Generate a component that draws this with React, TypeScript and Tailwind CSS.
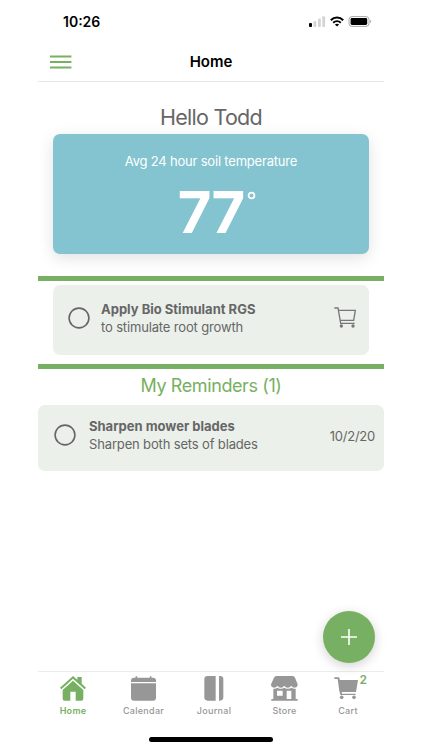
import type { ReactNode } from 'react';

interface TaskRowProps {
  title: string;
  detail: string;
  className: string;
  textClassName: string;
  children: ReactNode;
}

interface TabProps {
  label: string;
  active?: boolean;
  className: string;
  children: ReactNode;
}

function StatusBar() {
  return (
    <div className="flex h-[43px] items-center justify-between pl-[25px] pr-3">
      <span className="text-[14px] leading-none font-semibold text-black">10:26</span>
      <div className="flex items-center gap-1">
        <svg width="17" height="11" viewBox="0 0 17 11">
          <rect x="0" y="7" width="3" height="4" rx="1" fill="#000" />
          <rect x="4.5" y="5" width="2.8" height="6" rx="1" fill="#d4d4d4" />
          <rect x="9" y="2.6" width="2.8" height="8.4" rx="1" fill="#d4d4d4" />
          <rect x="13.3" y="0.2" width="2.8" height="10.8" rx="1" fill="#d4d4d4" />
        </svg>
        <svg width="14" height="11" viewBox="0 0 14 11" fill="none" stroke="#000" strokeWidth="2">
          <path d="M.8 4.2C4.3.6 9.7.6 13.2 4.2" />
          <path d="M3.2 6.8c2.2-2.1 5.4-2.1 7.6 0" />
          <path d="M7 10.6 4.9 8.5c1.2-1 3-1 4.2 0z" fill="#000" stroke="none" />
        </svg>
        <svg width="24" height="11" viewBox="0 0 24 11">
          <rect x="1" y="0.6" width="20" height="9.8" rx="3" fill="none" stroke="#a8a8a8" strokeWidth="1" />
          <rect x="2.6" y="2.1" width="16.6" height="6.8" rx="1.4" fill="#000" />
          <path d="M22.2 3.8c1.4.5 1.4 2.9 0 3.4z" fill="#a8a8a8" />
        </svg>
      </div>
    </div>
  );
}

function Header() {
  return (
    <header className="grid h-[39px] grid-cols-3 items-center border-b border-[#e6e6e6] px-3">
      <svg width="22" height="14" viewBox="0 0 22 14" stroke="#77b062" strokeWidth="1.8">
        <path d="M0 1.5h21.4M0 7h21.4M0 12.5h21.4" />
      </svg>
      <h1 className="pb-0.5 text-center text-[15px] leading-none font-semibold text-black">Home</h1>
    </header>
  );
}

function TaskRow({ title, detail, className, textClassName, children }: TaskRowProps) {
  return (
    <div className={`flex items-center rounded-[7px] bg-[#ebf0eb] ${className}`}>
      <svg className="shrink-0" width="22" height="22" viewBox="0 0 22 22" fill="none" stroke="#666" strokeWidth="1.6">
        <circle cx="11" cy="11" r="9.9" />
      </svg>
      <div className={`flex-1 text-[13px] leading-[18px] text-[#666] ${textClassName}`}>
        <p className="font-bold">{title}</p>
        <p className="tracking-[-0.15px]">{detail}</p>
      </div>
      {children}
    </div>
  );
}

function Tab({ label, active, className, children }: TabProps) {
  return (
    <div className={`flex flex-col items-center pt-1 ${active ? 'text-[#77b062]' : 'text-[#979797]'} ${className}`}>
      <div className="h-[25px]">{children}</div>
      <span className={`mt-1 text-[9px] leading-[12px] tracking-[0.28px] ${active ? 'font-semibold' : 'font-medium'}`}>{label}</span>
    </div>
  );
}

function TabBar() {
  return (
    <nav className="flex h-[66px] border-t border-[#ececec]">
      <Tab label="Home" active className="w-[70px]">
        <svg width="26" height="25" viewBox="0 0 78 75" fill="currentColor">
          <path d="M39 0 52 11V3h13v20l13 12-4 5-35-32L4 40l-4-5z" />
          <path d="M39 14 70 42v26q0 6-6 6H47V47H31v27H14q-6 0-6-6V42z" />
        </svg>
      </Tab>
      <Tab label="Calendar" className="w-[71px]">
        <svg width="25" height="25" viewBox="0 0 75 75" fill="currentColor">
          <path d="M9 5h4q0-5 3-5t3 5h37q0-5 3-5t3 5h4q9 0 9 9v4H0v-4q0-9 9-9z" />
          <path d="M0 22h75v43q0 9-9 9H9q-9 0-9-9z" />
        </svg>
      </Tab>
      <Tab label="Journal" className="w-[70px]">
        <svg width="20" height="25" viewBox="0 0 60 75" fill="currentColor">
          <path d="M11 0h24v74H11Q1 74 1 64V10Q1 0 11 0zM45 0h3q10 0 10 10v54q0 10-10 10h-3z" />
        </svg>
      </Tab>
      <Tab label="Store" className="w-[71px]">
        <svg width="27" height="25" viewBox="0 0 81 75" fill="currentColor">
          <path d="M16 0h49q5 0 7 5l8 20q0 10-9 10-7 0-10-6-4 6-11 6-6 0-10-6-4 6-10 6-7 0-11-6-3 6-10 6-9 0-9-10L9 5q2-5 7-5z" />
          <path fillRule="evenodd" d="M7 38q8 1 12-3 5 4 11 3 6 0 10-3 5 4 11 3 6 0 11-3 4 4 12 3v31h6v5H1v-5h6zM18 44v15h17V44zM47 44v25h14V44z" />
        </svg>
      </Tab>
      <Tab label="Cart" className="relative w-[56px]">
        <svg className="-ml-1" width="24" height="25" viewBox="0 0 72 75" fill="currentColor">
          <path d="M1 4h14l3 8h54l-6 36H23l1 5h41v4H19l-3-12L11 9H1z" />
          <circle cx="23" cy="64" r="5.5" />
          <circle cx="60" cy="64" r="5.5" />
        </svg>
        <span className="absolute top-0 right-[9px] text-[12px] leading-[15px] font-semibold text-[#77b062]">2</span>
      </Tab>
    </nav>
  );
}

export default function App() {
  return (
    <div className="h-[750px] w-full overflow-hidden bg-white font-['Inter',sans-serif]">
      <div className="relative mx-auto flex h-full w-[346px] flex-col">
        <StatusBar />
        <Header />
        <main className="flex-1">
          <h2 className="pt-[20px] pb-[2px] text-center text-[21.5px] leading-[30px] tracking-[-0.75px] text-[#666]">Hello Todd</h2>
          <section className="mx-[15px] h-[120px] rounded-[7px] bg-[#83c4d0] text-center text-white shadow-[0_4px_16px_rgba(0,0,0,0.12)]">
            <p className="pt-[18px] text-[13px] leading-[18px] tracking-[-0.2px]">Avg 24 hour soil temperature</p>
            <div className="mt-[13px] flex items-start justify-center">
              <span className="pl-3 text-[58px] leading-[58px] font-bold tracking-[-1px]">77</span>
              <svg className="mt-[8px] ml-[3px]" width="9" height="9" viewBox="0 0 9 9" fill="none" stroke="#fff" strokeWidth="1.8">
                <circle cx="4.5" cy="4.5" r="2.9" />
              </svg>
            </div>
          </section>
          <div className="mt-[22px] h-[5px] bg-[#77b062]" />
          <TaskRow
            title="Apply Bio Stimulant RGS"
            detail="to stimulate root growth"
            className="mx-[15px] mt-1 h-[70px] pr-3 pb-[5px] pl-[15px]"
            textClassName="ml-[11px]"
          >
            <svg width="23" height="21" viewBox="0 0 69 63" fill="none" stroke="#777" strokeWidth="4">
              <path d="M1 3h11l8 46h42M14 10h50l-5 30H19" />
              <circle cx="22" cy="57" r="5" fill="#777" stroke="none" />
              <circle cx="57" cy="57" r="5" fill="#777" stroke="none" />
            </svg>
          </TaskRow>
          <div className="mt-[9px] h-[5px] bg-[#77b062]" />
          <h3 className="pt-[5px] pb-px text-center text-[18px] leading-[24px] tracking-[-0.4px] text-[#77b062]">My Reminders (1)</h3>
          <TaskRow
            title="Sharpen mower blades"
            detail="Sharpen both sets of blades"
            className="mt-[6px] h-[66px] pr-[9px] pb-[6px] pl-[16px]"
            textClassName="ml-[13px]"
          >
            <span className="mt-1 text-[13px] tracking-[-0.25px] text-[#666]">10/2/20</span>
          </TaskRow>
        </main>
        <TabBar />
        <div className="h-[13px]">
          <div className="mx-auto h-[5px] w-[124px] rounded-full bg-black" />
        </div>
        <button className="absolute right-[9px] bottom-[87px] flex size-[52px] items-center justify-center rounded-full bg-[#77b062] shadow-[0_3px_12px_rgba(0,0,0,0.18)]">
          <svg width="16" height="16" viewBox="0 0 16 16" stroke="#fff" strokeWidth="1.6">
            <path d="M8 0v16M0 8h16" />
          </svg>
        </button>
      </div>
    </div>
  );
}
